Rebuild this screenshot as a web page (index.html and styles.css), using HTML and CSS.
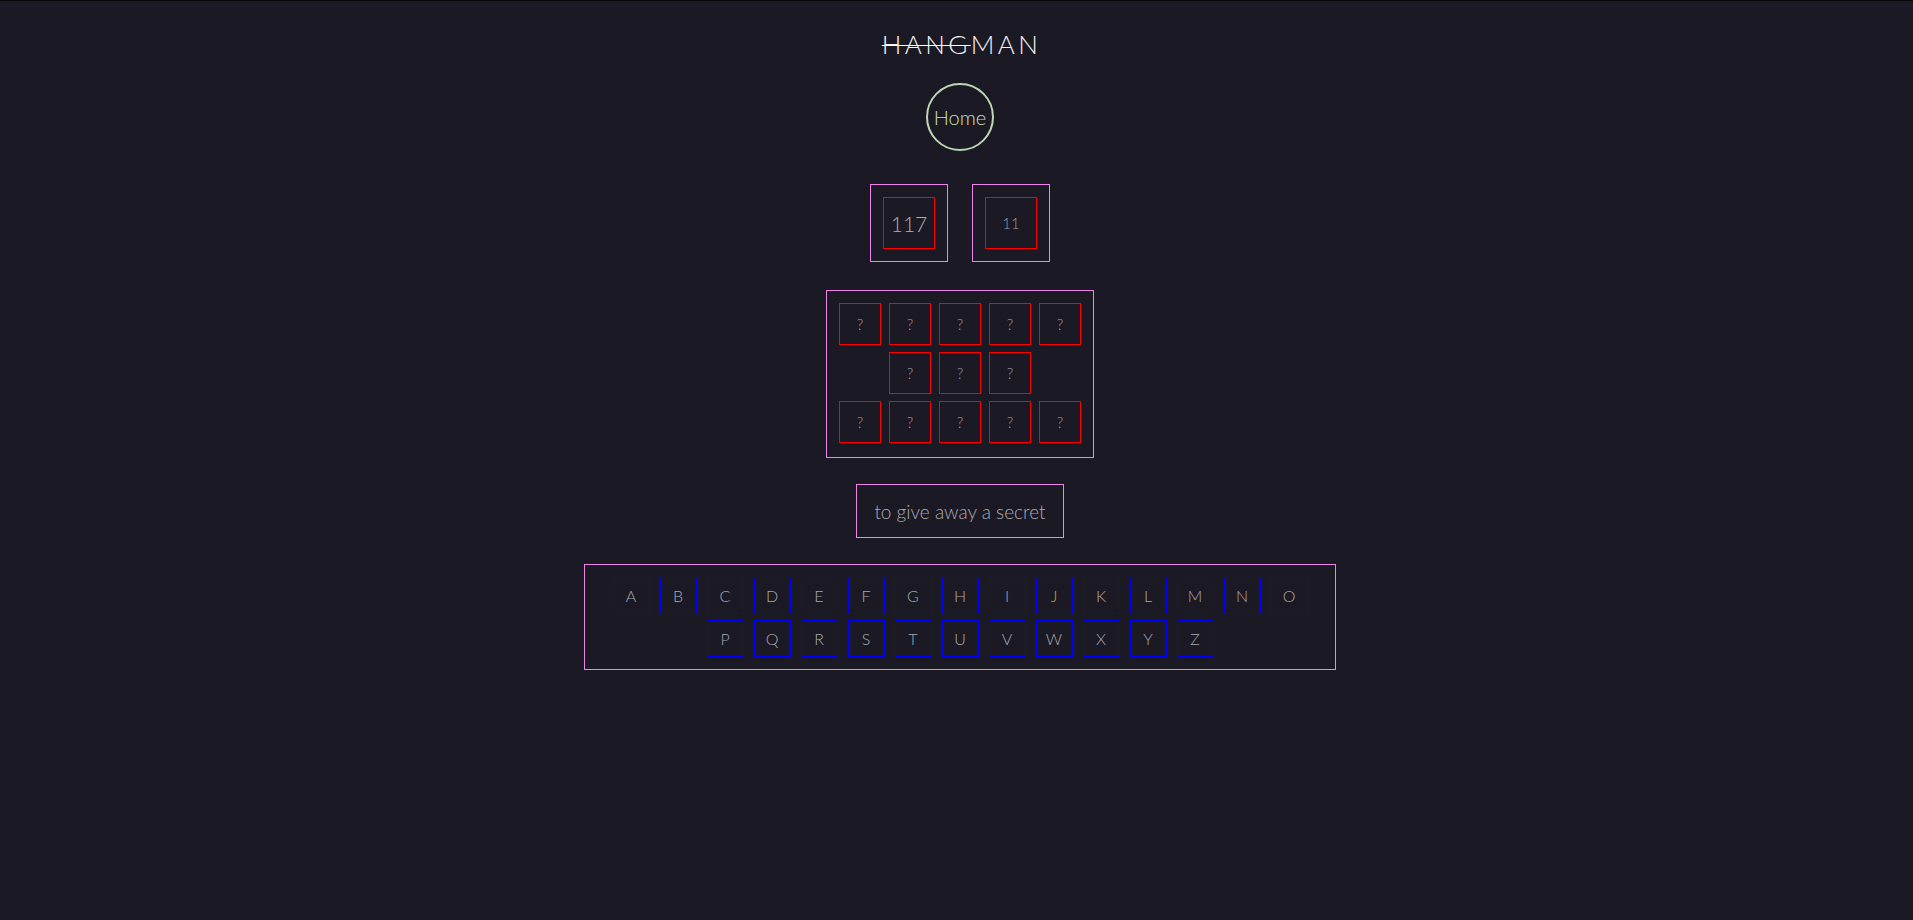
FILE: index.html
```html
<!DOCTYPE html>
<html lang="en">
<head>
<meta charset="utf-8">
<title>Hangman</title>
<link rel="stylesheet" href="styles.css">
</head>
<body>
<main class="app">
  <h1 class="title"><span class="struck">HANG</span>MAN</h1>
  <a class="home" href="#">Home</a>
  <section class="scores">
    <div class="score"><div class="score-inner big">117</div></div>
    <div class="score"><div class="score-inner">11</div></div>
  </section>
  <section class="word">
    <div class="word-row">
      <div class="cell">?</div><div class="cell">?</div><div class="cell">?</div><div class="cell">?</div><div class="cell">?</div>
    </div>
    <div class="word-row">
      <div class="cell">?</div><div class="cell">?</div><div class="cell">?</div>
    </div>
    <div class="word-row">
      <div class="cell">?</div><div class="cell">?</div><div class="cell">?</div><div class="cell">?</div><div class="cell">?</div>
    </div>
  </section>
  <section class="hint">to give away a secret</section>
  <section class="keys">
    <button class="key">A</button><button class="key">B</button><button class="key">C</button><button class="key">D</button><button class="key">E</button><button class="key">F</button><button class="key">G</button><button class="key">H</button><button class="key">I</button><button class="key key-gold">J</button><button class="key">K</button><button class="key">L</button><button class="key">M</button><button class="key">N</button><button class="key">O</button><button class="key">P</button><button class="key">Q</button><button class="key">R</button><button class="key">S</button><button class="key">T</button><button class="key">U</button><button class="key">V</button><button class="key">W</button><button class="key">X</button><button class="key">Y</button><button class="key">Z</button>
  </section>
</main>
</body>
</html>
```

FILE: styles.css
```css
html, body {
  margin: 0;
  padding: 0;
  height: 100%;
}
body {
  background: #1b1a24;
  border-top: 1px solid #08080a;
  box-sizing: border-box;
  font-family: Lato, "Open Sans", sans-serif;
  font-weight: 300;
  color: #a9a9b0;
}
.app {
  display: flex;
  flex-direction: column;
  align-items: center;
  padding-left: 7px;
}
.title {
  margin: 28px 0 0 0;
  font-size: 26px;
  font-weight: 300;
  letter-spacing: 3.4px;
  line-height: 30px;
  color: #f4f4f4;
  padding-left: 3px;
}
.struck {
  text-decoration: line-through;
  text-decoration-thickness: 1px;
  text-decoration-color: #ffffff;
}
.home {
  margin-top: 24px;
  width: 64px;
  height: 64px;
  border: 2px solid #bcd6b6;
  border-radius: 50%;
  display: flex;
  align-items: center;
  justify-content: center;
  color: #c6e0b8;
  font-size: 20px;
  font-weight: 300;
  text-decoration: none;
}
.scores {
  margin-top: 33px;
  display: flex;
  gap: 24px;
}
.score {
  border: 1px solid #ee82ee;
  padding: 12px;
}
.score-inner {
  width: 50px;
  height: 50px;
  border: 1px solid #ff0000;
  display: flex;
  align-items: center;
  justify-content: center;
  font-size: 15px;
  color: #9a9aa2;
}
.score-inner.big {
  font-size: 21px;
  color: #a8b0b8;
}
.word {
  margin-top: 28px;
  border: 1px solid #ee82ee;
  padding: 12px 12px 14px;
  display: flex;
  flex-direction: column;
  gap: 7px;
}
.word-row {
  display: flex;
  justify-content: center;
  gap: 8px;
}
.cell {
  width: 40px;
  height: 40px;
  border: 1px solid #ff0000;
  display: flex;
  align-items: center;
  justify-content: center;
  font-size: 15px;
  color: #9a9aa6;
}
.hint {
  margin-top: 26px;
  border: 1px solid #ee82ee;
  padding: 0 17px;
  height: 52px;
  display: flex;
  align-items: center;
  font-size: 19px;
  color: #a9aab4;
}
.keys {
  margin-top: 26px;
  width: 726px;
  border: 1px solid #ee82ee;
  padding: 12px;
  display: flex;
  flex-wrap: wrap;
  justify-content: center;
  gap: 6px 10px;
}
.key {
  width: 37px;
  height: 37px;
  margin: 0;
  padding: 0;
  box-sizing: border-box;
  background: transparent;
  border: 1px solid #0000ff;
  font-family: Lato, "Open Sans", sans-serif;
  font-weight: 300;
  font-size: 16px;
  color: #a8a8b2;
  cursor: pointer;
}
.key-gold {
  color: #d4a52a;
}
```
